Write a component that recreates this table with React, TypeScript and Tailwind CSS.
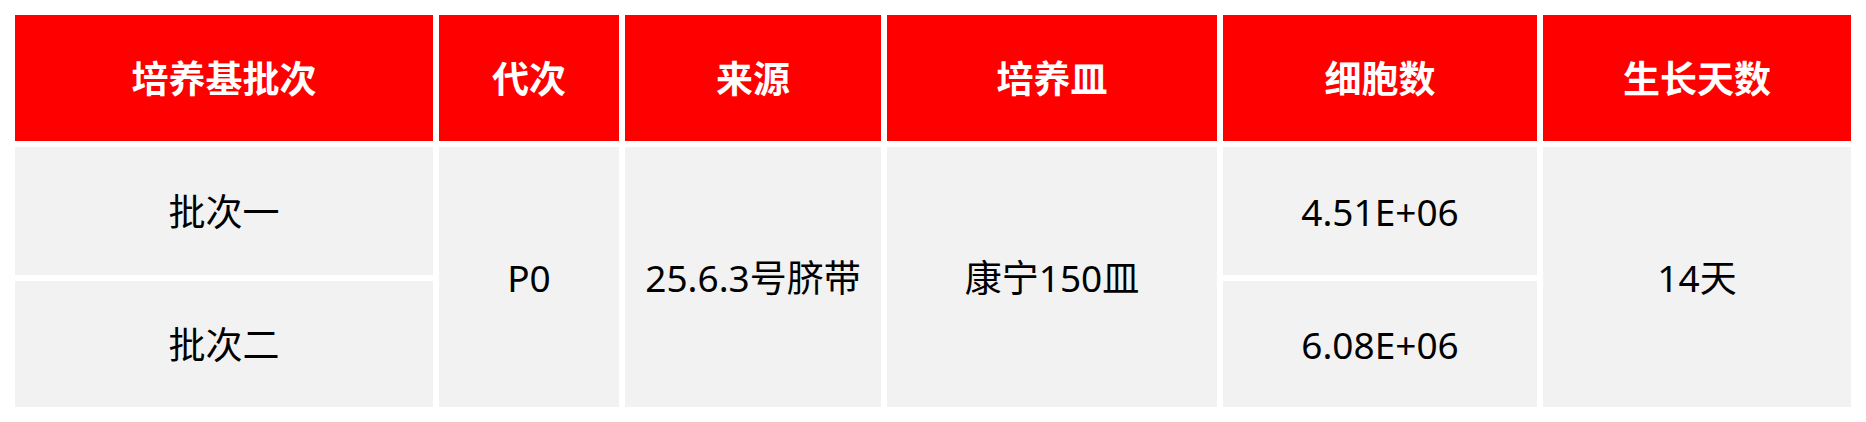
import React from "react";

const font = { fontFamily: '"Noto Sans", "Noto Sans CJK SC", sans-serif' };

export default function App() {
  const headers = ["培养基批次", "代次", "来源", "培养皿", "细胞数", "生长天数"];
  const cell = "bg-[#f2f2f2] text-black flex items-center justify-center";
  return (
    <div className="w-[1866px] h-[422px] bg-white p-[15px]" style={font}>
      <div className="grid grid-cols-[418px_180px_256px_330px_314px_308px] grid-rows-[126px_128px_126px] gap-[6px] text-[37px] leading-none">
        {headers.map((h) => (
          <div key={h} className="bg-[#ff0000] text-white font-bold flex items-center justify-center">
            {h}
          </div>
        ))}
        <div className={`${cell} col-start-1 row-start-2`}>批次一</div>
        <div className={`${cell} col-start-2 row-start-2 row-span-2`}>P0</div>
        <div className={`${cell} col-start-3 row-start-2 row-span-2`}>25.6.3号脐带</div>
        <div className={`${cell} col-start-4 row-start-2 row-span-2`}>康宁150皿</div>
        <div className={`${cell} col-start-5 row-start-2`}>4.51E+06</div>
        <div className={`${cell} col-start-6 row-start-2 row-span-2`}>14天</div>
        <div className={`${cell} col-start-1 row-start-3`}>批次二</div>
        <div className={`${cell} col-start-5 row-start-3`}>6.08E+06</div>
      </div>
    </div>
  );
}
